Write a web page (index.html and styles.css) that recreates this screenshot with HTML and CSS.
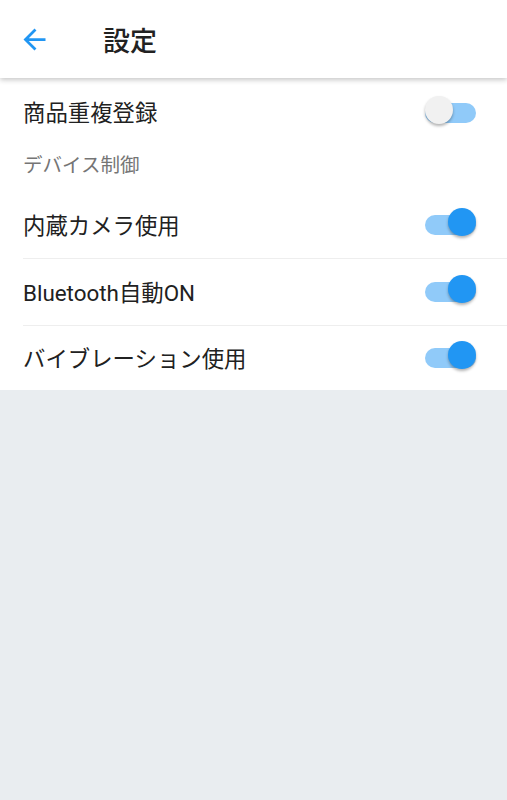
FILE: index.html
```html
<!DOCTYPE html>
<html lang="ja">
<head>
    <meta charset="UTF-8"/>
    <title>設定</title>
    <link rel="stylesheet" href="styles.css">
</head>
<body>
<header class="bar">
    <svg class="back" viewBox="0 0 24 24"><path d="M20 11H7.83l5.59-5.59L12 4l-8 8 8 8 1.41-1.41L7.83 13H20v-2z"/></svg>
    <h1>設定</h1>
</header>
<main class="list">
    <div class="row">
        <span>商品重複登録</span>
        <span class="switch"><span class="knob"></span></span>
    </div>
    <div class="section">デバイス制御</div>
    <div class="row line">
        <span>内蔵カメラ使用</span>
        <span class="switch on"><span class="knob"></span></span>
    </div>
    <div class="row line">
        <span>Bluetooth自動ON</span>
        <span class="switch on"><span class="knob"></span></span>
    </div>
    <div class="row last">
        <span>バイブレーション使用</span>
        <span class="switch on"><span class="knob"></span></span>
    </div>
</main>
</body>
</html>
```

FILE: styles.css
```css
html {background:#e9edf0;}
body {margin:0;font-family:Roboto, "Noto Sans CJK JP", sans-serif;color:#212121;}
.bar {position:relative;z-index:1;height:78px;background:#fff;display:flex;align-items:center;box-shadow:0 2px 5px rgba(0,0,0,.22);}
.back {width:33px;height:33px;fill:#2196f3;margin-left:18px;}
.bar h1 {margin:0 0 0 52px;font-size:27px;font-weight:500;color:#222;}
.list {background:#fff;}
.row {height:66px;margin-left:23px;padding-right:31px;display:flex;align-items:center;justify-content:space-between;font-size:22.4px;}
.row span:first-child {margin-top:-3px;}
.row:first-child {height:69px;}
.row.last {height:64px;}
.line {border-bottom:1px solid #eeeeee;}
.section {height:45px;line-height:38px;padding-left:23px;font-size:19.5px;color:#757575;}
.switch {position:relative;width:51px;height:20px;border-radius:10px;background:#90caf9;}
.knob {position:absolute;left:0;top:-4px;width:28px;height:28px;border-radius:50%;background:#f1f1f1;box-shadow:0 2px 3px rgba(0,0,0,.3);}
.on .knob {left:auto;right:0;background:#2196f3;}
```
